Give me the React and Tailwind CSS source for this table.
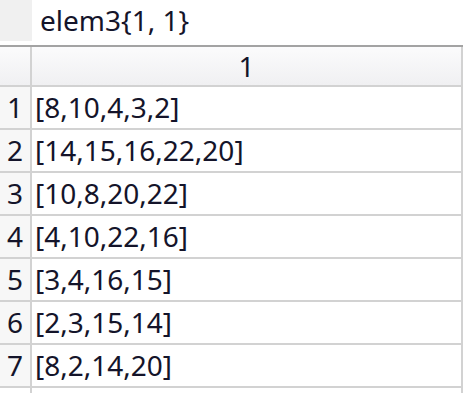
import React from 'react';

const rows = [
  '[8,10,4,3,2]',
  '[14,15,16,22,20]',
  '[10,8,20,22]',
  '[4,10,22,16]',
  '[3,4,16,15]',
  '[2,3,15,14]',
  '[8,2,14,20]',
];

export default function App() {
  return (
    <div
      className="w-[465px] h-[393px] overflow-hidden bg-white text-[#14142a]"
      style={{ fontFamily: '"Noto Sans", "Open Sans", sans-serif' }}
    >
      {/* variable name bar */}
      <div className="flex h-[45px]">
        <div className="w-[32px] h-[41px] bg-[#f0f0f0]" />
        <div className="pl-[8px] text-[28px] leading-[41px]">elem3{'{'}1, 1{'}'}</div>
      </div>

      {/* table */}
      <div className="w-[463px] border-t-2 border-[#a3a3a3]">
        <div className="flex h-[40px] border-b-2 border-[#d2d2d2] bg-gradient-to-b from-[#fbfbfc] to-[#f0f0f2]">
          <div className="w-[32px] border-r-2 border-[#d2d2d2]" />
          <div className="flex-1 border-r-2 border-[#d2d2d2] text-center text-[28px] leading-[38px]">1</div>
        </div>
        {rows.map((r, i) => (
          <div key={i} className="flex h-[43px] border-b-2 border-[#d2d2d2]">
            <div className="w-[32px] border-r-2 border-[#d2d2d2] bg-[#f7f7f7] text-center text-[28px] leading-[41px]">
              {i + 1}
            </div>
            <div className="flex-1 border-r-2 border-[#d2d2d2] pl-[3px] text-[28px] leading-[41px]">{r}</div>
          </div>
        ))}
        <div className="flex h-[10px]">
          <div className="w-[32px] border-r-2 border-[#d2d2d2]" />
          <div className="flex-1 border-r-2 border-[#d2d2d2]" />
        </div>
      </div>
    </div>
  );
}
